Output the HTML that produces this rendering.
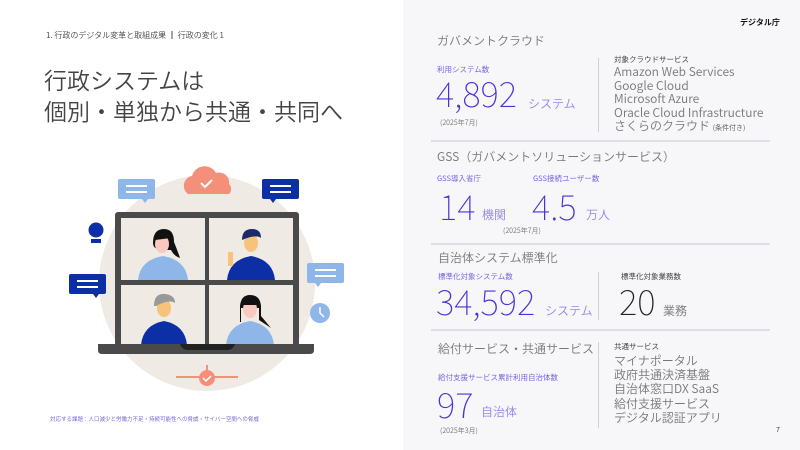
<!DOCTYPE html>
<html><head><meta charset="utf-8"><style>
*{margin:0;padding:0;box-sizing:border-box}
body{width:800px;height:450px;overflow:hidden;background:#fff;position:relative;font-family:"Noto Sans CJK JP DemiLight","Noto Sans CJK JP Light","Noto Sans CJK JP","Liberation Sans",sans-serif;color:#555}
.a{position:absolute;white-space:nowrap;line-height:1}
.rp{position:absolute;left:403px;top:0;width:397px;height:450px;background:#f7f7fa}
.h{font-size:12px;color:#777}
.lb{font-size:7.5px;color:#7a66e0;font-family:"Noto Sans CJK JP",sans-serif}
.lbd{font-size:7.5px;color:#444;font-family:"Noto Sans CJK JP",sans-serif}
.big{color:#4a32d8;font-family:"Noto Sans CJK JP Thin","Noto Sans CJK JP Light","Noto Sans CJK JP DemiLight","Noto Sans CJK JP",sans-serif;font-weight:100}
.u{font-size:12px;color:#9385e6}
.d{font-size:7px;color:#777}
.li{font-size:12px;color:#777}
.hr{position:absolute;left:431px;width:339px;height:2px;background:#dedee4}
.vr{position:absolute;left:598px;width:1px;background:#cfcfd6}
</style></head><body>
<div class="rp"></div>
<div class="a" style="left:740px;top:19px;font-size:8px;font-weight:bold;color:#111;font-family:'Noto Sans CJK JP',sans-serif">デジタル庁</div>

<div class="a" style="left:46px;top:32px;font-size:8px;color:#444">1. 行政のデジタル変革と取組成果 ┃ 行政の変化 1</div>
<div class="a" style="left:44px;top:68px;font-size:23px;color:#444">行政システムは</div>
<div class="a" style="left:44px;top:99px;font-size:23px;color:#444">個別・単独から共通・共同へ</div>

<svg style="position:absolute;left:0;top:0" width="400" height="450">
<circle cx="207" cy="283" r="108" fill="#efebe4"/>
<path d="M188 194 a10 10 0 0 1 4-18 a13 13 0 0 1 24-3 a10 10 0 0 1 13 11 a7 7 0 0 1 0 10z" fill="#f4907a"/>
<path d="M201 183 l4 4 l7-7" stroke="#fff" stroke-width="2" fill="none"/>
<rect x="118" y="179" width="37" height="20" rx="2" fill="#8fb6e8"/><path d="M142 199 l3 4 l3-4z" fill="#8fb6e8"/>
<rect x="126" y="185" width="21" height="2" fill="#fff"/><rect x="126" y="191" width="21" height="2" fill="#fff"/>
<rect x="262" y="179" width="37" height="20" rx="2" fill="#0d2fa6"/><path d="M270 199 l3 4 l3-4z" fill="#0d2fa6"/>
<rect x="270" y="185" width="21" height="2" fill="#fff"/><rect x="270" y="191" width="21" height="2" fill="#fff"/>
<circle cx="96" cy="230" r="7.5" fill="#0d2fa6"/><rect x="91" y="239" width="10" height="4" fill="#0d2fa6"/>
<rect x="69" y="274" width="37" height="20" rx="2" fill="#0d2fa6"/><path d="M93 294 l3 4 l3-4z" fill="#0d2fa6"/>
<rect x="77" y="280" width="21" height="2" fill="#fff"/><rect x="77" y="286" width="21" height="2" fill="#fff"/>
<rect x="307" y="263" width="37" height="20" rx="2" fill="#8fb6e8"/><path d="M315 283 l3 4 l3-4z" fill="#8fb6e8"/>
<rect x="315" y="269" width="21" height="2" fill="#fff"/><rect x="315" y="275" width="21" height="2" fill="#fff"/>
<circle cx="320" cy="313" r="10" fill="#8fb6e8"/><path d="M320 307 v6 l4 4" stroke="#fff" stroke-width="1.5" fill="none"/>
<rect x="115" y="212" width="184" height="134" rx="3" fill="#4a4a4a"/>
<rect x="121" y="218" width="84" height="62" fill="#efebe4"/><rect x="209" y="218" width="84" height="62" fill="#efebe4"/>
<rect x="121" y="285" width="84" height="60" fill="#efebe4"/><rect x="209" y="285" width="84" height="60" fill="#efebe4"/>
<path d="M138 280 q2-20 25-24 q23 4 25 24z" fill="#8fb6e8"/><path d="M153 243 q0-14 11-14 q10 0 10 13 q4 10 6 16 q-6-2-9-8 l-7 0 q-11 0-11-7z" fill="#111"/><ellipse cx="162" cy="244" rx="7" ry="9" fill="#f9c9c0"/><path d="M155 240 q2-8 9-8 q6 0 7 6z" fill="#111"/>
<path d="M227 280 q2-20 24-24 q22 4 24 24z" fill="#0d2fa6"/><ellipse cx="251" cy="243" rx="7" ry="9" fill="#f7c27a"/><path d="M242 240 q0-11 10-11 q9 0 9 9 q-5-4-19 2z" fill="#1b2a6b"/><rect x="228" y="252" width="5" height="14" fill="#f7c27a"/>
<path d="M141 345 q2-20 23-24 q21 4 23 24z" fill="#0d2fa6"/><ellipse cx="164" cy="308" rx="7" ry="9" fill="#f7c27a"/><path d="M154 306 q0-13 11-12 q10 1 10 9 q-6-4-19 3z" fill="#999"/>
<path d="M226 345 q2-20 24-24 q22 4 24 24z" fill="#8fb6e8"/><path d="M240 322 v-16 q1-11 10-11 q10 0 11 11 v10 l10 12 l-12-8 v-12 q-10 0-18 0 v14z" fill="#111"/><ellipse cx="250" cy="309" rx="7" ry="9" fill="#f9c9c0"/><path d="M242 305 q1-9 8-9 q8 0 9 9z" fill="#111"/>
<path d="M98 344 h216 v6 q0 4-4 4 h-208 q-4 0-4-4z" fill="#4a4a4a"/><path d="M180 344 h55 q-2 6-8 6 h-39 q-6 0-8-6z" fill="#222"/>
<rect x="176" y="376" width="62" height="2" fill="#f4907a"/><rect x="206" y="365" width="2" height="8" fill="#f4907a"/>
<circle cx="207" cy="378" r="8" fill="#f4907a"/><path d="M203 378 l3 3 l5-5" stroke="#fff" stroke-width="1.5" fill="none"/>
</svg>
<div class="a" style="left:50px;top:417px;font-size:5.5px;color:#6a5acd">対応する課題：人口減少と労働力不足・持続可能性への脅威・サイバー空間への脅威</div>

<div class="a h" style="left:437px;top:35px">ガバメントクラウド</div>
<div class="a lb" style="left:437px;top:66px">利用システム数</div>
<div class="a big" style="left:436px;top:75px;font-size:35px">4,892</div>
<div class="a u" style="left:528px;top:98px">システム</div>
<div class="a d" style="left:440px;top:120px">(2025年7月)</div>
<div class="vr" style="top:58px;height:74px"></div>
<div class="a lbd" style="left:614px;top:56px">対象クラウドサービス</div>
<div class="a li" style="left:614px;top:66px">Amazon Web Services</div>
<div class="a li" style="left:614px;top:80px">Google Cloud</div>
<div class="a li" style="left:614px;top:93px">Microsoft Azure</div>
<div class="a li" style="left:614px;top:107px">Oracle Cloud Infrastructure</div>
<div class="a li" style="left:614px;top:120px">さくらのクラウド <span style="font-size:7px;color:#555">(条件付き)</span></div>
<div class="hr" style="top:140px"></div>

<div class="a h" style="left:437px;top:151px">GSS（ガバメントソリューションサービス）</div>
<div class="a lb" style="left:437px;top:175px">GSS導入省庁</div>
<div class="a lb" style="left:533px;top:175px">GSS接続ユーザー数</div>
<div class="a big" style="left:439px;top:188px;font-size:35px">14</div>
<div class="a u" style="left:482px;top:209px">機関</div>
<div class="a big" style="left:532px;top:188px;font-size:35px">4.5</div>
<div class="a u" style="left:586px;top:209px">万人</div>
<div class="a d" style="left:503px;top:228px">(2025年7月)</div>
<div class="hr" style="top:243px"></div>

<div class="a h" style="left:438px;top:252px">自治体システム標準化</div>
<div class="a lb" style="left:438px;top:273px">標準化対象システム数</div>
<div class="a big" style="left:436px;top:283px;font-size:35px">34,592</div>
<div class="a u" style="left:545px;top:305px">システム</div>
<div class="vr" style="top:272px;height:48px"></div>
<div class="a lbd" style="left:621px;top:273px">標準化対象業務数</div>
<div class="a big" style="left:619px;top:283px;font-size:35px;color:#222">20</div>
<div class="a u" style="left:663px;top:305px;color:#777">業務</div>
<div class="hr" style="top:329px"></div>

<div class="a h" style="left:438px;top:343px">給付サービス・共通サービス</div>
<div class="a lb" style="left:438px;top:374px">給付支援サービス累計利用自治体数</div>
<div class="a big" style="left:437px;top:386px;font-size:35px">97</div>
<div class="a u" style="left:481px;top:406px">自治体</div>
<div class="a d" style="left:440px;top:428px">(2025年3月)</div>
<div class="vr" style="top:342px;height:86px"></div>
<div class="a lbd" style="left:614px;top:343px">共通サービス</div>
<div class="a li" style="left:614px;top:355px">マイナポータル</div>
<div class="a li" style="left:614px;top:369px">政府共通決済基盤</div>
<div class="a li" style="left:614px;top:383px">自治体窓口DX SaaS</div>
<div class="a li" style="left:614px;top:398px">給付支援サービス</div>
<div class="a li" style="left:614px;top:412px">デジタル認証アプリ</div>
<div class="a" style="left:776px;top:427px;font-size:7px;color:#333">7</div>
</body></html>
